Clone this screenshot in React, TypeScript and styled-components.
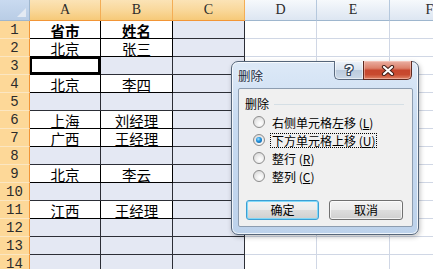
import React from 'react';
import styled, { createGlobalStyle, css } from 'styled-components';

const Global = createGlobalStyle`
  html, body { margin: 0; padding: 0; background: #ffffff; }
  body { width: 433px; height: 269px; overflow: hidden; }
`;

const Screen = styled.div`
  position: relative;
  width: 433px;
  height: 269px;
  overflow: hidden;
  font-family: "Noto Sans CJK SC", "Noto Sans", sans-serif;
`;

const Sheet = styled.div`
  display: grid;
  grid-template-columns: 30px 71px 72px 72px 72px 73px 80px;
  grid-template-rows: 21px repeat(14, 18px);
`;

const Corner = styled.div`
  box-sizing: border-box;
  position: relative;
  border-right: 1px solid #9eb6ce;
  border-bottom: 1px solid #9eb6ce;
  background: linear-gradient(180deg, #c9daf0 0%, #b9cde6 100%);
  &::after {
    content: '';
    position: absolute;
    right: 3px;
    bottom: 3px;
    width: 0;
    height: 0;
    border-left: 9px solid transparent;
    border-bottom: 9px solid #e3eaf3;
  }
`;

const ColHead = styled.div<{ $sel?: boolean }>`
  box-sizing: border-box;
  display: flex;
  align-items: center;
  justify-content: center;
  font-family: "Liberation Serif", serif;
  font-size: 14px;
  line-height: 1;
  color: #2b2b2b;
  ${p =>
    p.$sel
      ? css`
          background: linear-gradient(180deg, #fbe3b6 0%, #f9d89b 50%, #f6c978 100%);
          border-right: 1px solid #f3ad55;
          border-bottom: 1px solid #f29536;
        `
      : css`
          background: linear-gradient(180deg, #f6f9fc 0%, #e9eff7 50%, #dde6f2 100%);
          border-right: 1px solid #b5c8dd;
          border-bottom: 1px solid #9eb6ce;
        `}
`;

const RowHead = styled.div`
  box-sizing: border-box;
  display: flex;
  align-items: center;
  justify-content: center;
  font-family: "Liberation Mono", monospace;
  font-size: 14px;
  line-height: 1;
  color: #2b2b2b;
  background: #fdd898;
  border-right: 1px solid #f29536;
  border-bottom: 1px solid #fbe6c2;
`;

const Cell = styled.div<{ $tint?: boolean; $boxed?: boolean; $active?: boolean; $bold?: boolean }>`
  box-sizing: border-box;
  display: flex;
  align-items: flex-end;
  justify-content: center;
  font-size: 14.5px;
  line-height: 15px;
  color: #000;
  white-space: nowrap;
  font-weight: ${p => (p.$bold ? 700 : 400)};
  background: ${p => (p.$tint ? '#e4e8f3' : '#ffffff')};
  border-right: 1px solid ${p => (p.$boxed ? (p.$tint ? '#2c2e36' : '#000') : '#d0d7e5')};
  border-bottom: 1px solid ${p => (p.$boxed ? (p.$tint ? '#2c2e36' : '#000') : '#d0d7e5')};
  ${p => p.$active && css`box-shadow: inset 0 0 0 2px #000;`}
`;

/* ---------- dialog ---------- */

const Window = styled.div`
  position: absolute;
  left: 231px;
  top: 61px;
  width: 188px;
  height: 174px;
  box-sizing: border-box;
  border: 1px solid #56667a;
  border-radius: 7px;
  background: linear-gradient(180deg, #dde9f7 0%, #c8dbf1 35%, #bdd2eb 100%);
  box-shadow: inset 0 0 0 1px rgba(255, 255, 255, 0.75), 1px 2px 5px rgba(0, 0, 0, 0.25);
  display: flex;
  flex-direction: column;
  padding: 0 5px 7px 6px;
  font-size: 12px;
`;

const TitleBar = styled.div`
  height: 26px;
  display: flex;
  justify-content: space-between;
  align-items: flex-start;
  flex: none;
`;

const Title = styled.span`
  padding-top: 7px;
  line-height: 14px;
  font-size: 12.5px;
  color: #1b2a3c;
  text-shadow: 0 0 4px rgba(255, 255, 255, 0.9);
`;

const Caption = styled.div`
  display: flex;
  margin-top: -1px;
  margin-right: 1px;
`;

const CapButton = styled.div<{ $close?: boolean }>`
  box-sizing: border-box;
  height: 19px;
  display: flex;
  align-items: center;
  justify-content: center;
  ${p =>
    p.$close
      ? css`
          width: 49px;
          border: 1px solid #5f2a20;
          border-top: none;
          border-radius: 0 0 5px 0;
          background: linear-gradient(180deg, #eab0a3 0%, #dc806a 40%, #c7462d 52%, #c84a2f 75%, #e08467 100%);
          box-shadow: inset 0 0 0 1px rgba(255, 220, 210, 0.45);
        `
      : css`
          width: 29px;
          border: 1px solid #5b6b80;
          border-top: none;
          border-right: none;
          border-radius: 0 0 0 5px;
          background: linear-gradient(180deg, #eef3f9 0%, #d8e3ef 48%, #bccbdd 52%, #cbd8e7 100%);
          box-shadow: inset 0 0 0 1px rgba(255, 255, 255, 0.55);
        `}
`;

const HelpGlyph = styled.span`
  font-family: "Liberation Sans", sans-serif;
  font-weight: 700;
  font-size: 14px;
  line-height: 1;
  color: #ffffff;
  text-shadow: 1px 0 0 #3c4a5c, -1px 0 0 #3c4a5c, 0 1px 0 #3c4a5c, 0 -1px 0 #3c4a5c,
    1px 1px 0 #3c4a5c, -1px -1px 0 #3c4a5c, 1px -1px 0 #3c4a5c, -1px 1px 0 #3c4a5c;
`;

const Panel = styled.div`
  flex: 1;
  box-sizing: border-box;
  border: 1px solid #8d9db0;
  border-radius: 2px;
  background: #f0f0f0;
  display: flex;
  flex-direction: column;
  padding: 8px 8px 6px 6px;
  color: #000;
`;

const GroupHead = styled.div`
  display: flex;
  align-items: center;
  gap: 5px;
  line-height: 14px;
`;

const GroupRule = styled.div`
  flex: 1;
  height: 1px;
  background: #d5dfe5;
`;

const RadioList = styled.div`
  display: flex;
  flex-direction: column;
  margin: 2px 0 0 8px;
`;

const RadioRow = styled.label`
  height: 18px;
  display: flex;
  align-items: center;
  gap: 6px;
`;

const RadioDot = styled.span<{ $on?: boolean }>`
  position: relative;
  flex: none;
  width: 12px;
  height: 12px;
  box-sizing: border-box;
  border-radius: 50%;
  border: 1px solid #8c8c8c;
  background: radial-gradient(circle at 60% 65%, #ffffff 0%, #f1f1f1 35%, #cfcfcf 100%);
  ${p =>
    p.$on &&
    css`
      &::after {
        content: '';
        position: absolute;
        left: 2px;
        top: 2px;
        width: 6px;
        height: 6px;
        border-radius: 50%;
        background: radial-gradient(circle at 40% 35%, #a6e1ff 0%, #2296e0 40%, #0b4f92 100%);
      }
    `}
`;

const RadioText = styled.span<{ $focus?: boolean }>`
  line-height: 13px;
  padding: 0 1px;
  white-space: nowrap;
  outline: ${p => (p.$focus ? '1px dotted #000' : 'none')};
`;

const Key = styled.span`
  text-decoration: underline;
`;

const ButtonRow = styled.div`
  margin-top: auto;
  display: flex;
  gap: 10px;
  padding-left: 1px;
`;

const PushButton = styled.div<{ $default?: boolean; $w: number }>`
  box-sizing: border-box;
  width: ${p => p.$w}px;
  height: 20px;
  border-radius: 3px;
  display: flex;
  align-items: center;
  justify-content: center;
  line-height: 1;
  background: linear-gradient(180deg, #f3f3f3 0%, #ebebeb 48%, #dddddd 52%, #cfcfcf 100%);
  border: 1px solid ${p => (p.$default ? '#3c9fd4' : '#707070')};
  box-shadow: inset 0 0 0 1px ${p => (p.$default ? 'rgba(120, 215, 250, 0.9)' : 'rgba(255, 255, 255, 0.7)')};
`;

type RowData = { a?: string; b?: string; bold?: boolean; active?: boolean } | null;

const rows: RowData[] = [
  { a: '省市', b: '姓名', bold: true },
  { a: '北京', b: '张三' },
  { active: true },
  { a: '北京', b: '李四' },
  null,
  { a: '上海', b: '刘经理' },
  { a: '广西', b: '王经理' },
  null,
  { a: '北京', b: '李云' },
  null,
  { a: '江西', b: '王经理' },
  null,
  null,
  null,
];

const cols = [
  { label: 'A', sel: true },
  { label: 'B', sel: true },
  { label: 'C', sel: true },
  { label: 'D' },
  { label: 'E' },
  { label: 'F' },
];

const options = [
  { text: '右侧单元格左移', key: 'L' },
  { text: '下方单元格上移', key: 'U', on: true },
  { text: '整行', key: 'R' },
  { text: '整列', key: 'C' },
];

export default function App() {
  return (
    <Screen>
      <Global />
      <Sheet>
        <Corner />
        {cols.map(c => (
          <ColHead key={c.label} $sel={c.sel}>
            {c.label}
          </ColHead>
        ))}
        {rows.map((r, i) => {
          const hasData = !!r && !!r.a;
          return (
            <React.Fragment key={i}>
              <RowHead>{i + 1}</RowHead>
              <Cell $boxed $tint={!hasData && !r?.active} $active={r?.active} $bold={r?.bold}>
                {r?.a}
              </Cell>
              <Cell $boxed $tint={!hasData} $bold={r?.bold}>
                {r?.b}
              </Cell>
              <Cell $boxed $tint />
              <Cell />
              <Cell />
              <Cell />
            </React.Fragment>
          );
        })}
      </Sheet>

      <Window>
        <TitleBar>
          <Title>删除</Title>
          <Caption>
            <CapButton>
              <HelpGlyph>?</HelpGlyph>
            </CapButton>
            <CapButton $close>
              <svg width="14" height="11" viewBox="0 0 14 11">
                <path d="M3 2 L11 9 M11 2 L3 9" stroke="#43201a" strokeWidth="4.2" strokeLinecap="round" fill="none" />
                <path d="M3 2 L11 9 M11 2 L3 9" stroke="#ffffff" strokeWidth="2.2" strokeLinecap="round" fill="none" />
              </svg>
            </CapButton>
          </Caption>
        </TitleBar>
        <Panel>
          <GroupHead>
            <span>删除</span>
            <GroupRule />
          </GroupHead>
          <RadioList>
            {options.map(o => (
              <RadioRow key={o.key}>
                <RadioDot $on={o.on} />
                <RadioText $focus={o.on}>
                  {o.text} (<Key>{o.key}</Key>)
                </RadioText>
              </RadioRow>
            ))}
          </RadioList>
          <ButtonRow>
            <PushButton $default $w={73}>确定</PushButton>
            <PushButton $w={74}>取消</PushButton>
          </ButtonRow>
        </Panel>
      </Window>
    </Screen>
  );
}
